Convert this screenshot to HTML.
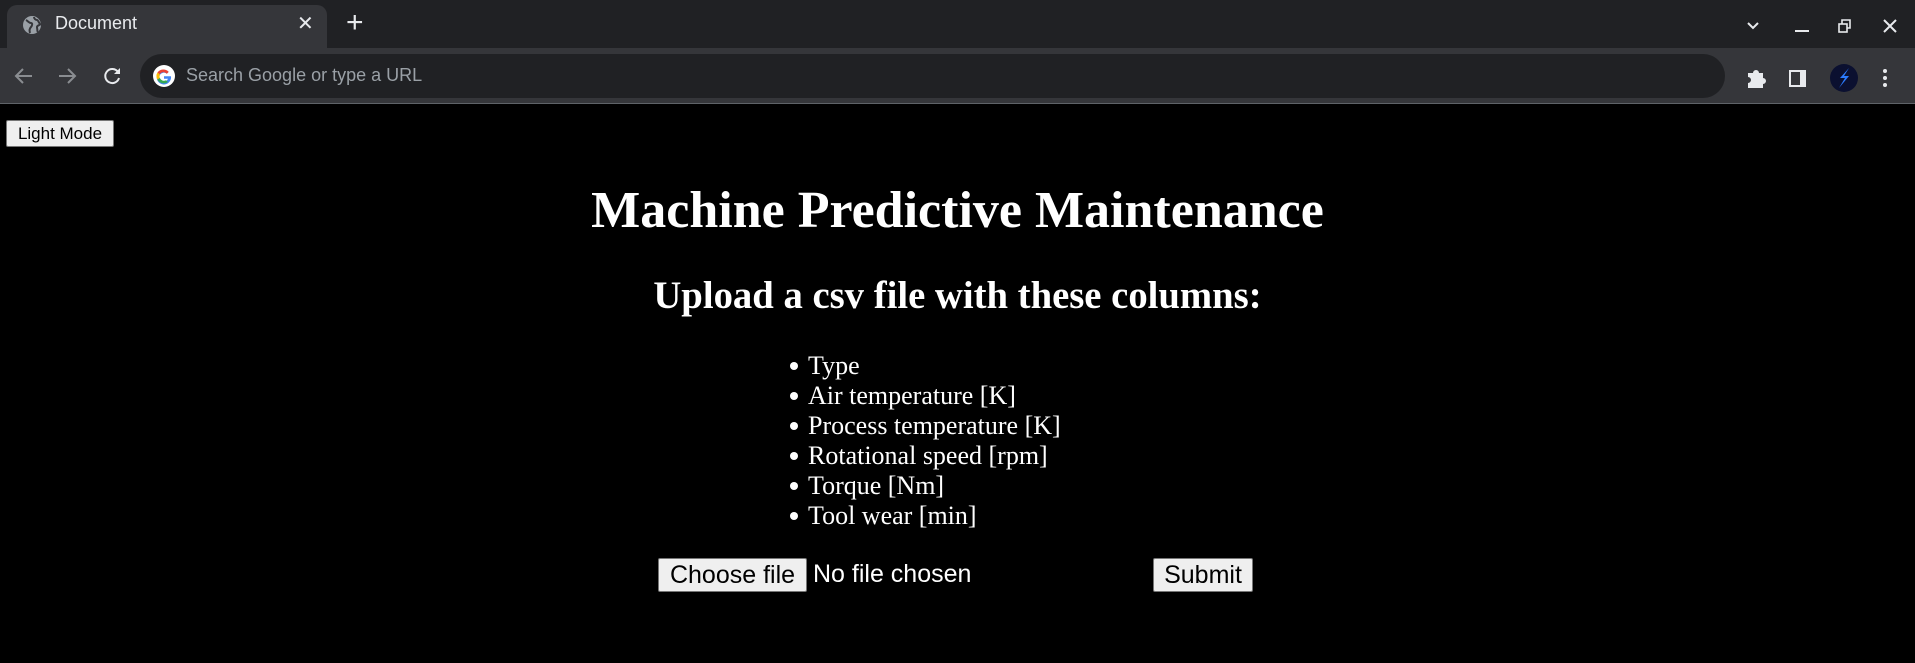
<!DOCTYPE html>
<html><head><meta charset="utf-8"><style>
*{margin:0;padding:0;box-sizing:border-box}
body{width:1915px;height:663px;background:#000;overflow:hidden;position:relative;font-family:"Liberation Serif",serif;color:#fff}
.strip{position:absolute;left:0;top:0;width:1915px;height:48px;background:#202124}
.tab{position:absolute;left:7px;top:5px;width:320px;height:43px;background:#35363a;border-radius:10px 10px 0 0}
.tb{position:absolute;left:0;top:48px;width:1915px;height:56px;background:#35363a;border-bottom:1px solid #5f6368}
.omni{position:absolute;left:140px;top:54px;width:1585px;height:44px;background:#202124;border-radius:22px}
.ui{font-family:"Liberation Sans",sans-serif;position:absolute}
.abs{position:absolute;white-space:nowrap}
.btn{font-family:"Liberation Sans",sans-serif;background:#efefef;color:#000;border:1px solid #767676;border-radius:2px;position:absolute;display:flex;align-items:center;justify-content:center}
.dot{position:absolute;left:790px;width:8px;height:8px;border-radius:50%;background:#fff}
</style></head><body>
<div class="strip"></div>
<div class="tab"></div>
<svg class="ui" style="left:22px;top:15px" width="20" height="20" viewBox="0 0 20 20"><circle cx="10" cy="10" r="9" fill="#9aa0a6"/><path d="M4 5c2 1 3 3 5 3s1 3 0 4-2 3-1 6M12 2c0 2 2 3 3 3s2 3 3 4-3 1-3 3 1 4 0 5" stroke="#35363a" stroke-width="2" fill="none"/></svg>
<div class="ui" style="left:55px;top:13px;font-size:18px;color:#e8eaed">Document</div>
<div class="ui" style="left:297px;top:11px;font-size:20px;color:#e8eaed">✕</div>
<div class="ui" style="left:346px;top:6px;font-size:30px;color:#e8eaed;font-weight:300">+</div>
<svg class="ui" style="left:1745px;top:18px" width="165" height="16" viewBox="0 0 165 16"><path d="M3 5l5 5 5-5" stroke="#e8eaed" stroke-width="2" fill="none"/><path d="M50 13h14" stroke="#e8eaed" stroke-width="2"/><rect x="94" y="6" width="8" height="8" stroke="#e8eaed" stroke-width="1.6" fill="none"/><path d="M97 6V2h8v8h-3" stroke="#e8eaed" stroke-width="1.6" fill="none"/><path d="M139 2l12 12M151 2l-12 12" stroke="#e8eaed" stroke-width="2"/></svg>
<div class="tb"></div>
<svg class="ui" style="left:12px;top:64px" width="110" height="24" viewBox="0 0 110 24"><path d="M20 12H5M11 5l-7 7 7 7" stroke="#8a8d91" stroke-width="2" fill="none"/><path d="M47 12h15M56 5l7 7-7 7" stroke="#8a8d91" stroke-width="2" fill="none"/><path d="M106 8a7 7 0 1 0 1 6" stroke="#e8eaed" stroke-width="2" fill="none"/><path d="M108 4v6h-6z" fill="#e8eaed"/></svg>
<div class="omni"></div>
<svg class="ui" style="left:152px;top:64px" width="24" height="24" viewBox="0 0 24 24"><circle cx="12" cy="12" r="11" fill="#fff"/><path d="M19 12.2h-7v2.6h4a4.5 4.5 0 1 1-1.2-5l1.9-1.9A7.2 7.2 0 1 0 19 12.2z" fill="#4285f4"/><path d="M5.4 8.5l2.3 1.8A4.5 4.5 0 0 1 14.8 9.8l1.9-1.9A7.2 7.2 0 0 0 5.4 8.5z" fill="#ea4335"/><path d="M5.4 15.5A7.2 7.2 0 0 0 16 18l-2-1.7a4.5 4.5 0 0 1-6.2-2.4z" fill="#34a853"/><path d="M5.4 8.5a7.2 7.2 0 0 0 0 7l2.4-1.6a4.5 4.5 0 0 1 0-3.6z" fill="#fbbc05"/></svg>
<div class="ui" style="left:186px;top:65px;font-size:18px;color:#9aa0a6">Search Google or type a URL</div>
<svg class="ui" style="left:1745px;top:63px" width="160" height="30" viewBox="0 0 160 30"><path d="M3 10h5a3 3 0 0 1 6 0h4v5a3 3 0 0 1 0 6v4H3v-5a3 3 0 0 0 0-6z" fill="#e8eaed"/><rect x="44" y="7" width="17" height="17" fill="#e8eaed"/><rect x="46" y="9" width="9" height="13" fill="#35363a"/><circle cx="99" cy="15" r="14" fill="#0b1030"/><path d="M104 5l-9 10h5l-6 10 10-12h-5z" fill="#2b7bff"/><circle cx="140" cy="8" r="2" fill="#e8eaed"/><circle cx="140" cy="15" r="2" fill="#e8eaed"/><circle cx="140" cy="22" r="2" fill="#e8eaed"/></svg>

<div class="btn" style="left:6px;top:120px;width:108px;height:27px;font-size:17px">Light Mode</div>
<div class="abs" style="left:0;width:1915px;text-align:center;top:181px;font-size:52px;font-weight:bold;line-height:60px">Machine Predictive Maintenance</div>
<div class="abs" style="left:0;width:1915px;text-align:center;top:274px;font-size:38.7px;font-weight:bold;line-height:44px">Upload a csv file with these columns:</div>
<div class="abs" style="left:808px;top:351px;font-size:26px;line-height:30px">
<div>Type</div><div>Air temperature [K]</div><div>Process temperature [K]</div><div>Rotational speed [rpm]</div><div>Torque [Nm]</div><div>Tool wear [min]</div></div>
<div class="dot" style="top:362px"></div><div class="dot" style="top:392px"></div><div class="dot" style="top:422px"></div><div class="dot" style="top:452px"></div><div class="dot" style="top:482px"></div><div class="dot" style="top:512px"></div>
<div class="btn" style="left:658px;top:558px;width:149px;height:34px;font-size:25px">Choose file</div>
<div class="ui abs" style="left:813px;top:560px;font-size:25px;color:#fff">No file chosen</div>
<div class="btn" style="left:1153px;top:558px;width:100px;height:34px;font-size:25px">Submit</div>
</body></html>
